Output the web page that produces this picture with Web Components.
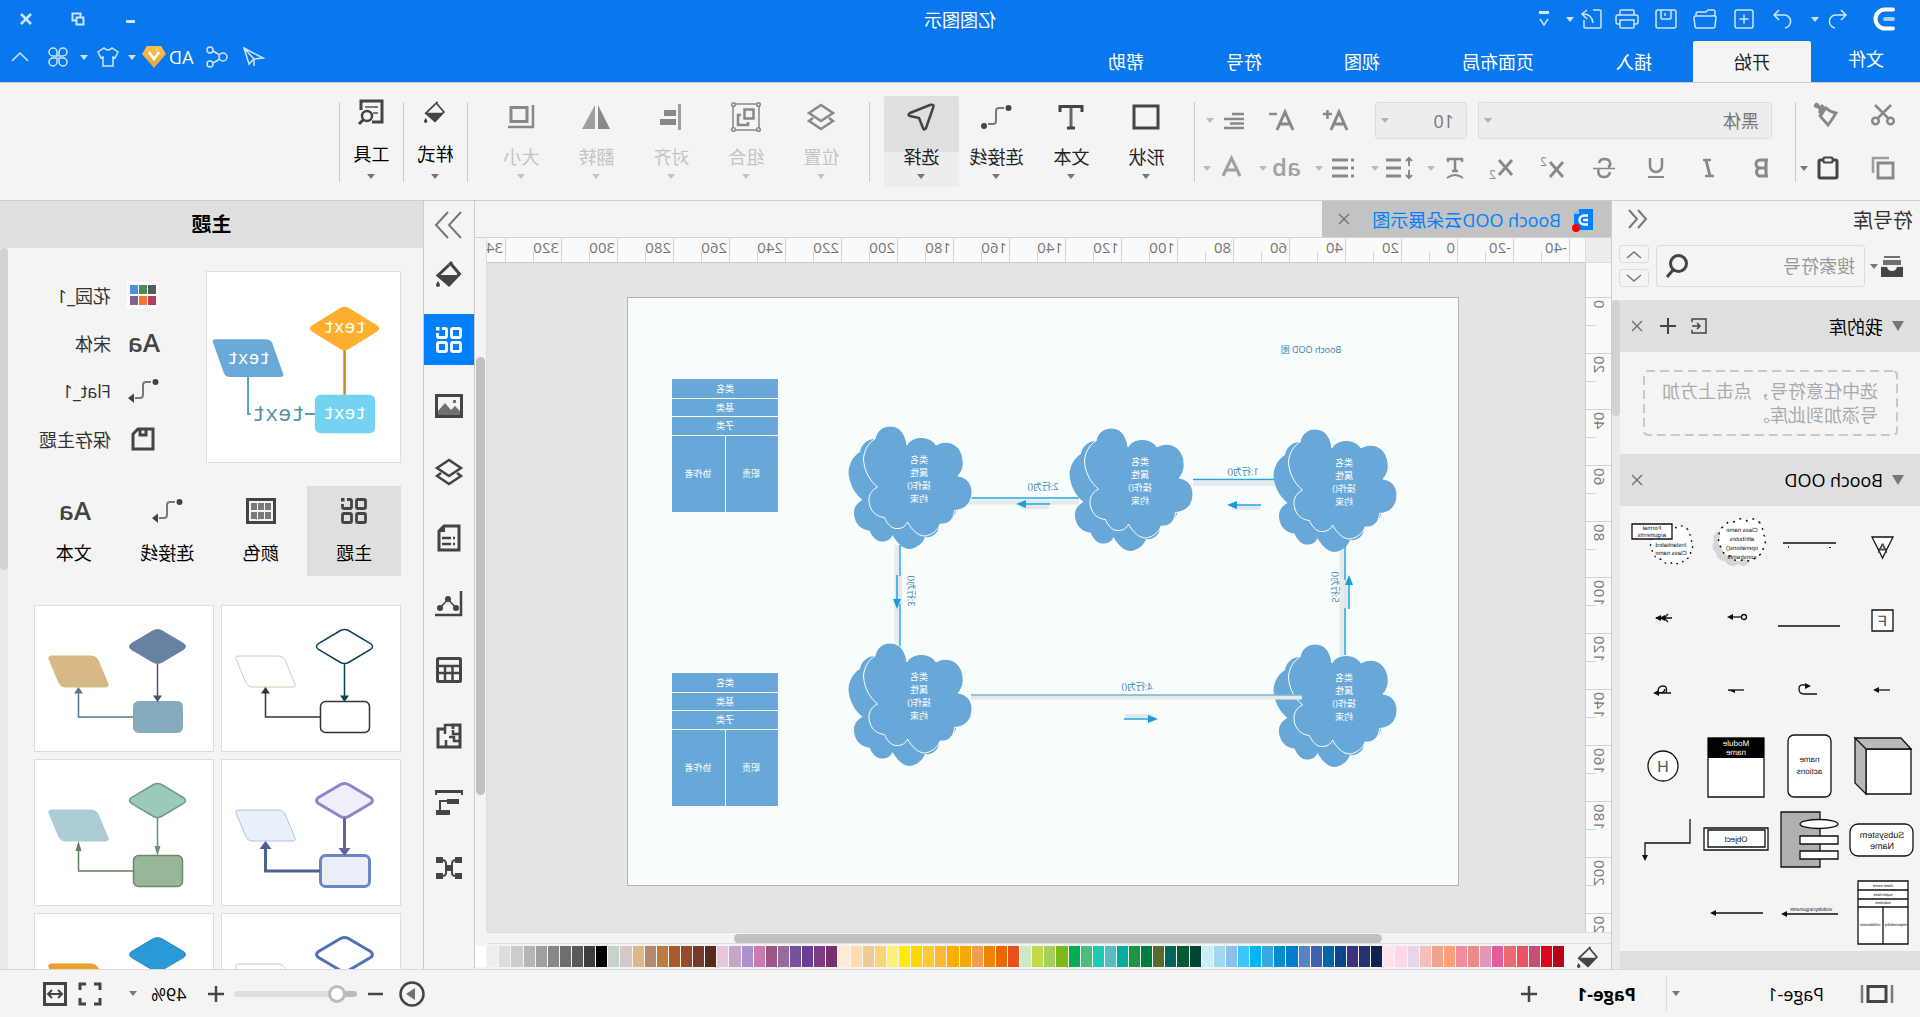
<!DOCTYPE html>
<html lang="zh-CN">
<head>
<meta charset="utf-8">
<title>亿图图示</title>
<style>
html,body{margin:0;height:100%;background:#f4f4f4;overflow:hidden}
body{font-family:"Open Sans","Noto Sans CJK SC",sans-serif;font-size:18px;color:#222}
ed-app{height:100vh;transform:scaleX(-1)}
</style>
</head>
<body>
<ed-app></ed-app>
<script>
const BASE = `
*{box-sizing:border-box}
:host{display:block}
button,select,input{font:inherit;color:inherit;background:none;border:0;margin:0;padding:0}
button{display:flex;align-items:center;justify-content:center}
a{color:inherit;text-decoration:none}
[hidden]{display:none}`;

function define(name, css, html) {
  customElements.define(name, class extends HTMLElement {
    connectedCallback() {
      if (this.shadowRoot) return;
      this.attachShadow({ mode: 'open' }).innerHTML =
        `<style>${BASE}${css}</style>` + (typeof html === 'function' ? html(this) : html);
    }
  });
}

/* name: [width, height, drawing] */
const S = 'stroke="none" fill="currentColor"';
const bucket = (w, h) => [w, h, `<g transform="scale(${w / 26})"><path d="M11 3 2.500 13 13 24 24 14.500 13 4"/><path ${S} d="M3 14h21L13 25z"/><path d="M13 4 10 1"/><path ${S} d="M24 20c1.500 2.500 2 3 2 4a2 2 0 0 1-4 0c0-1 .5-1.500 2-4z"/></g>`];
const squares = `<g stroke-width="2.800"><rect x="1.500" y="1.500" width="9" height="9" rx="1.500"/><rect x="1.500" y="15.500" width="9" height="9" rx="1.500"/><rect x="15.500" y="15.500" width="9" height="9" rx="1.500"/><path d="M20 1.500h-3q-1.500 0-1.500 1.500v6q0 1.500 1.500 1.500h6q1.500 0 1.500-1.500V6"/></g><path ${S} d="M22.500 0h3.500v3.500h-3.500z"/>`;
const elbow = `<circle ${S} cx="3.500" cy="4" r="3"/><path opacity=".7" d="M8 4h5q3 0 3 3v10q0 3 3 3h5"/>`;
const ICONS = {
  logo: [22, 24, '<path stroke="#fff" stroke-width="4" stroke-linecap="round" d="M2 2.500h8a9.500 9.500 0 0 1 0 19H2"/><path stroke="#a3cdfa" stroke-width="4" stroke-linecap="round" d="M2 12h8"/>'],
  undo: [20, 20, '<path d="M6 1 1 6l5 5M1 6h9a6.500 6.500 0 0 1 2 13"/>'],
  redo: [20, 20, '<path d="m14 1 5 5-5 5M19 6h-9a6.500 6.500 0 0 0-2 13"/>'],
  add: [20, 20, '<rect x="1" y="1" width="18" height="18" rx="2"/><path d="M10 5.500v9M5.500 10h9"/>'],
  open: [24, 20, '<path d="M2 8V3a2 2 0 0 1 2-2h5l2 2h8a2 2 0 0 1 2 2v2"/><path d="M5 7h16a2 2 0 0 1 2 2l-1 8a2 2 0 0 1-2 2H4a2 2 0 0 1-2-2L1 9"/><path d="M1 9q0-3 4-2"/>'],
  save: [22, 20, '<rect x="1" y="1" width="20" height="18" rx="2"/><path d="M6 1v8q0 1 1 1h8q1 0 1-1V1M12 4v3"/>'],
  print: [24, 20, '<path d="M5 6V2q0-1 1-1h12q1 0 1 1v4M5 15H3a2 2 0 0 1-2-2V8a2 2 0 0 1 2-2h18a2 2 0 0 1 2 2v5a2 2 0 0 1-2 2h-2M5 11h14v7q0 1-1 1H6q-1 0-1-1z"/>'],
  export: [22, 20, '<path d="M10 1H3a1 1 0 0 0-1 1v16a1 1 0 0 0 1 1h15a1 1 0 0 0 1-1v-7M16 1l5 4-5 5M20 5q-9 0-10 9"/>'],
  more: [12, 16, `<path ${S} d="M1 0h10v3H1z"/><path d="m2 8 4 6 4-6"/>`],
  min: [10, 12, `<path ${S} d="M0 7h9v3H0z"/>`],
  restore: [14, 14, '<path stroke-width="2" d="M1.500 5.500h7v7h-7zM4.500 5V1.500h8v7H9"/>'],
  close: [12, 12, '<path stroke-width="2.500" d="m1 1 10 10M11 1 1 11"/>'],
  x: [12, 12, '<path stroke-width="1.500" d="m1 1 10 10M11 1 1 11"/>'],
  send: [22, 22, '<path d="M1 12 20 2l-5 16-5-5zM20 2 10 13v7"/>'],
  share: [22, 22, '<circle cx="5" cy="11" r="4"/><circle cx="18" cy="4" r="3"/><circle cx="18" cy="18" r="3"/><path d="m8 9 7-4M8 13l7 4"/>'],
  gem: [24, 22, '<defs><linearGradient id="g" x2="0" y2="1"><stop stop-color="#ffc250"/><stop offset="1" stop-color="#e6a238"/></linearGradient></defs><path stroke="none" fill="url(#g)" d="M5 0h14l5 8-12 14L0 8z"/><path stroke="#fff" stroke-width="2.500" d="m7 6 5 7 5-7"/>'],
  shirt: [22, 20, '<path d="M7 1q4 4 8 0l6 4-3 6-2-1v9H6v-9l-2 1-3-6z"/>'],
  clover: [20, 20, '<path d="M9 9H5a4 4 0 1 1 4-4zM11 9V5a4 4 0 1 1 4 4zM9 11v4a4 4 0 1 1-4-4zM11 11h4a4 4 0 1 1-4 4z"/>'],
  up: [18, 10, '<path d="m1 9 8-8 8 8"/>'],
  stepUp: [14, 7, '<path stroke-width="1.500" d="m0 7 7-6 7 6"/>'],
  stepDown: [14, 7, '<path stroke-width="1.500" d="m0 0 7 6 7-6"/>'],
  caret: [8, 5, `<path ${S} d="M0 0h8L4 5z"/>`],
  tri: [12, 10, `<path ${S} d="M0 0h12L6 10z"/>`],
  cut: [24, 22, '<g stroke-width="2.500"><circle cx="4.500" cy="17" r="3.300"/><circle cx="19.500" cy="17" r="3.300"/><path d="M20 1 7 14M4 1l13 13"/></g>'],
  copy: [24, 24, '<path stroke-width="2.800" d="M2 7h15v15H2z"/><path stroke-width="2.500" opacity=".8" d="M6 2h16v15"/>'],
  brush: [26, 26, `<path stroke-width="2.800" d="M3 11q6-1 10-5l6 8-8 9q-4-5-8-12z"/><path ${S} d="m13 6 4-4 2 2 2-3q3-1 4 2t-3 3l-2 2 1 2-4 5z"/>`],
  paste: [22, 24, '<rect x="2" y="4" width="18" height="18" rx="1.500" stroke-width="3"/><rect x="6.500" y="1.500" width="9" height="5" rx="1" fill="#f4f4f4"/>'],
  aplus: [28, 24, `<path stroke-width="3" d="m2 21 8-18 8 18M5 15h10"/><path stroke-width="2.500" d="M17 5h9M21.500 1v9"/>`],
  aminus: [28, 24, `<path stroke-width="3" d="m2 21 8-18 8 18M5 15h10"/><path stroke-width="2.500" d="M18 5h8"/>`],
  lines: [22, 18, '<path stroke-width="2.500" d="M1 2h12M1 7h20M1 11.500h14M1 16h20"/>'],
  bold: [20, 24, `<path stroke-width="3" d="M4 4v17M2 4h8a4 4 0 0 1 0 8H4M4 12h7a4.500 4.500 0 0 1 0 8H2"/>`],
  italic: [20, 24, `<path stroke-width="2.500" d="M7 4h8M4 20h9"/><path stroke-width="3" d="M12 4 8 20"/>`],
  under: [20, 24, `<path stroke-width="2.500" d="M4 2v8a6 6 0 0 0 12 0V2"/><path d="M2 21h16"/>`],
  strike: [22, 24, `<path stroke-width="2.500" d="M16 7q-1-4-5.500-4T5 6.500 7 11M5 16q1 5 6 5t5.500-4-1-4"/><path stroke-width="1.500" d="M0 12.500h22"/>`],
  sup: [26, 24, `<path stroke-width="2.800" d="m2 6 13 15M15 6 2 21"/><text x="18" y="10" style="font-size:12px;font-weight:400">2</text>`],
  sub: [26, 24, `<path stroke-width="2.800" d="m2 4 13 15M15 4 2 19"/><text x="18" y="23" style="font-size:12px;font-weight:400">2</text>`],
  tarc: [18, 24, `<path stroke-width="2.500" d="M2 6V3h14v3M9 3v12M6 15h6"/><path d="M1 22q8-6 16 0"/>`],
  spacing: [28, 22, `<path d="M4 1v8M4 13v8M1 4l3-3 3 3M1 18l3 3 3-3"/><path stroke-width="2.800" d="M12 3h15M12 11h15M12 19h15"/>`],
  list: [22, 20, `<path stroke-width="2.800" d="M0 2h3M6 2h16M0 10h3M6 10h16M0 18h3M6 18h16"/>`],
  ab: [28, 24, `<text x="0" y="20">ab</text>`],
  acol: [20, 24, `<path stroke-width="3" d="m1 20 8.500-18L18 20M4 14h11"/>`],
  rect: [28, 26, '<path stroke-width="3" d="M2 2h24v22H2z"/>'],
  text: [26, 26, '<path stroke-width="3" d="M2 8V2.500h22V8M9 24h8"/><path stroke-width="3" opacity=".8" d="M13 3v20"/>'],
  conn: [32, 26, elbow + `<circle ${S} cx="28" cy="22" r="3"/>`],
  conna: [32, 26, elbow + `<path ${S} d="M25 15.500V25l6-5z"/>`],
  arrow: [28, 28, '<path stroke-width="2.500" stroke-linejoin="round" d="M2 5Q0 1 5 2l20 8q3 2 0 3l-9 2-4 10q-1 3-3 0z"/>'],
  layers: [28, 28, '<path stroke-width="2.500" d="M14 2 26 10 14 18 2 10z"/><path stroke-width="2.500" d="m6 15-4 3 12 8 12-8-4-3"/>'],
  group: [30, 30, '<g stroke-width="1.500"><path d="M2 2h26v26H2z"/><g fill="#f4f4f4"><circle cx="2.500" cy="2.500" r="1.800"/><circle cx="27.500" cy="2.500" r="1.800"/><circle cx="2.500" cy="27.500" r="1.800"/><circle cx="27.500" cy="27.500" r="1.800"/></g></g><path stroke-width="2.500" d="M7.500 7.500h9v9h-9zM13 20v3h10V13h-3"/>'],
  align: [24, 28, `<path ${S} opacity=".8" d="M2 1h3v26H2z"/><path ${S} d="M7 7h12v6H7zM7 16h16v6H7z"/>`],
  flip: [28, 26, `<path ${S} d="M12 1v24H0z"/><path ${S} opacity=".8" d="M15 1v24h13z"/>`],
  size: [28, 26, '<path stroke-width="3" d="M8 3.500h16v14H8z"/><path stroke-width="2.500" d="M2 1v22h25"/>'],
  bucket: bucket(26, 26),
  bucketS: bucket(22, 22),
  tools: [26, 26, '<path stroke-width="3" d="M12 23H2V2h21v9"/><path opacity=".7" d="M6 8h13M6 14h5"/><circle cx="17" cy="17" r="5" stroke-width="2.500"/><path stroke-width="3" d="m21 21 4 4"/>'],
  collapse: [20, 20, '<path d="m9 1-8 9 8 9M18 1l-8 9 8 9"/>'],
  expand: [28, 28, '<path d="m2 1 12 13L2 27M15 1l12 13-12 13"/>'],
  library: [22, 24, `<path ${S} opacity=".75" d="M3 2h16v2H3zM2 6h18v5H2z"/><path ${S} d="M0 13h6q1 4 5 4t5-4h6v10H0z"/>`],
  search: [24, 24, '<circle cx="10.500" cy="9.500" r="8" stroke-width="3"/><path stroke-width="3" d="m16 16 6 7"/>'],
  import: [16, 16, '<path stroke-width="1.500" d="M15 4V1H1v14h14v-3M15 8H7M10 5 7 8l3 3"/>'],
  plus: [16, 16, '<path d="M8 0v16M0 8h16"/>'],
  minus: [16, 16, '<path stroke-width="2.500" d="M0 8h15"/>'],
  plusB: [16, 16, '<path stroke-width="2.500" d="M8 0v16M0 8h16"/>'],
  theme: [26, 26, squares],
  image: [28, 24, `<rect x="1.500" y="1.500" width="25" height="21" stroke-width="3"/><path ${S} opacity=".75" d="M3 21v-4l5-5 4 4 6-7 7 8v4zM7 6h3v3H7z"/>`],
  doc: [24, 28, `<path stroke-width="3" d="M2 2h15l5 5v19H2z"/><path ${S} d="M16 1v7h6z"/><path stroke-width="2.500" d="M6 14h2M10 14h9M6 20h2M10 20h9"/>`],
  chart: [28, 26, `<path stroke-width="2.500" d="M2 0v24h26"/><g ${S}><circle cx="7" cy="17" r="3"/><circle cx="15" cy="8" r="3"/><circle cx="23" cy="17" r="3"/></g><path stroke-width="1.500" d="m7 17 8-9 8 9"/>`],
  table: [26, 26, '<rect x="1.500" y="1.500" width="23" height="23" rx="1" stroke-width="3"/><path stroke-width="2.500" d="M2 9h22M2 16h22M9.500 9v15M17 9v15"/>'],
  plan: [26, 26, '<path stroke-width="3" d="M9 6V2H2v22h22V6h-7"/><path stroke-width="2.500" d="M9 2h8v9M2 11h7V7M2 18h6v-4h5M16 24v-7"/>'],
  org: [28, 26, `<path ${S} d="M0 1h28v5h-2V4H2v2H0zM4 10h12v5H4zM13 21h14v5H13z"/><path d="M16 12h7v9"/>`],
  mind: [28, 26, `<path ${S} d="M1 2h7v6H1zM20 2h7v6h-7zM1 18h7v6H1zM20 18h7v6h-7zM10 10h8v6h-8z"/><path d="M7 5q4 0 4 4v9q0 3-4 3M21 5q-4 0-4 4v9q0 3 4 3"/>`],
  font: [34, 24, `<text x="0" y="21" style="font-size:26px">Aa</text>`],
  disk: [24, 24, '<path stroke-width="3" d="M2 2h15l5 5v15H2zM9 3v5h6V3"/>'],
  palette: [30, 26, '<rect x="1.500" y="1.500" width="27" height="23" stroke-width="3"/><g fill="currentColor" stroke="none" opacity=".7"><path d="M5 5h6v7H5zM12 5h6v7h-6zM19 5h6v7h-6zM5 14h6v7H5zM12 14h6v7h-6zM19 14h6v7h-6z"/></g>'],
  pal6: [32, 26, '<rect width="32" height="26" fill="#fff" stroke="none"/><g stroke="none"><path fill="#545b5e" d="M3 3h8v9H3z"/><path fill="#4f8a5b" d="M12 3h8v9h-8z"/><path fill="#4a90e2" d="M21 3h8v9h-8z"/><path fill="#b73c63" d="M3 14h8v9H3z"/><path fill="#f4772c" d="M12 14h8v9h-8z"/><path fill="#7f6190" d="M21 14h8v9h-8z"/></g>'],
  pages: [34, 18, '<path stroke-width="2.500" opacity=".7" d="M2 0v18M32 0v18"/><path stroke-width="3" d="M8 1.500h18v15H8z"/>'],
  play: [26, 26, `<circle cx="13" cy="13" r="11.500" stroke-width="2.500"/><path ${S} opacity=".75" d="M10 7v12l9-6z"/>`],
  full: [24, 24, '<path stroke-width="3" d="M2 8V2h6M16 2h6v6M22 16v6h-6M8 22H2v-6"/>'],
  fit: [24, 24, '<path stroke-width="3" d="M1.500 1.500h21v21h-21z"/><path d="M6 12h12M9 8l-4 4 4 4M15 8l4 4-4 4"/>']
};
define('ed-icon', `:host{display:inline-flex;flex:none}
svg{display:block;fill:none;stroke:currentColor;stroke-width:var(--sw,2);overflow:visible}
text{fill:currentColor;stroke:none;font-size:24px;font-weight:600;font-family:"Open Sans",sans-serif}`,
  el => { const [w, h, d] = ICONS[el.getAttribute('name')];
    return `<svg width="${w}" height="${h}" viewBox="0 0 ${w} ${h}" aria-hidden="true">${d}</svg>`; });
const ic = (n, c = '') => `<ed-icon name="${n}" class="${c}"></ed-icon>`;

/* ---------- header ---------- */
define('ed-header', `
:host{background:#0978ee;color:#fff;height:82px;--sw:1.5}
.top{display:grid;grid-template-columns:1fr auto 1fr;height:38px;align-items:center}
.quick,.win{display:flex;align-items:center}
.quick{padding-left:25px;color:#cfe4fc}
.quick ed-icon[name=logo]{margin-right:20px}
.quick button{width:39px;height:30px}
.quick .n{width:32px}
.quick .c{width:12px}
.quick .c+.w{margin-left:6px}
.win{justify-content:flex-end}
.win button{width:52px;height:30px;color:#cfe4fc}
.bar{display:flex;height:44px;justify-content:space-between}
nav{display:flex}
nav a{padding:0 41px;line-height:42px;display:block;margin-top:3px}
nav a.file{padding:0 36px;line-height:36px;width:109px}
nav a.on{background:#f4f4f4;color:#222;border-radius:2px 2px 0 0}
.tools{display:flex;align-items:center;height:38px;padding-right:2px;color:#cfe4fc}
.tools button{height:30px;width:36px}
.tools .c{width:12px}
.tools .w{width:40px}
.tools .ad{width:auto;color:#fff;gap:3px;padding:0 4px 0 6px}`,
`<div class="top"><div class="quick">${ic('logo')}
<button class="n" aria-label="撤销">${ic('undo')}</button><button class="c" aria-label="撤销列表">${ic('caret')}</button>
<button class="w" aria-label="重做">${ic('redo')}</button><button aria-label="新建">${ic('add')}</button><button aria-label="打开">${ic('open')}</button><button aria-label="保存">${ic('save')}</button><button aria-label="打印">${ic('print')}</button><button class="n" aria-label="导出">${ic('export')}</button><button class="c" aria-label="导出列表">${ic('caret')}</button><button aria-label="自定义">${ic('more')}</button></div>
<span>亿图图示</span>
<div class="win"><button aria-label="最小化">${ic('min')}</button><button aria-label="还原">${ic('restore')}</button><button aria-label="关闭">${ic('close')}</button></div></div>
<div class="bar"><nav><a class="file" href="#">文件</a><a class="on" href="#">开始</a><a href="#">插入</a><a href="#">页面布局</a><a href="#">视图</a><a href="#">符号</a><a href="#">帮助</a></nav>
<div class="tools"><button aria-label="发送">${ic('send')}</button><button aria-label="分享">${ic('share')}</button><button class="ad">AD${ic('gem')}</button><button class="c" aria-label="账户">${ic('caret')}</button><button aria-label="皮肤">${ic('shirt')}</button><button class="c" aria-label="皮肤列表">${ic('caret')}</button><button class="w" aria-label="应用">${ic('clover')}</button><button aria-label="收起">${ic('up')}</button></div></div>`);

/* ---------- ribbon ---------- */
define('tool-button', `:host{width:75px;flex:none}
button{width:100%;height:91px;flex-direction:column;justify-content:flex-start;color:#444;border-radius:2px}
.i{height:42px;display:flex;align-items:center}
span{line-height:24px;margin:7px 0 5px;color:#222;white-space:nowrap}
.c{color:#777}
:host([disabled]) button{color:#888}
:host([disabled]) span,:host([disabled]) .c{color:#c4c4c4}
:host([on]) button{background:linear-gradient(#dfdfdf 56px,#ededed 56px)}
:host([small]){width:63px}
:host([small]) .i{height:32px}
:host([small]) span{margin:14px 0 8px;color:#000}`,
  el => `<button><div class="i">${ic(el.getAttribute('icon'))}</div><span><slot></slot></span>${ic('caret', 'c')}</button>`);

define('ed-ribbon', `
:host{height:119px;border-top:1px solid #ccc;border-bottom:1px solid #ccc;background:#f4f4f4;display:flex;align-items:flex-start;padding-top:19px;color:#888}
.sep{width:1px;height:80px;background:#ccc;flex:none}
.clip{display:grid;grid-template-columns:60px 54px;row-gap:27px;padding:0 3px 0 7px;height:80px;grid-auto-rows:26px;align-items:center}
.clip button{height:26px}
.clip .p{color:#444;gap:9px;padding-left:14px;justify-content:flex-start}
.clip .p ed-icon+ed-icon{color:#777}
.font{display:flex;flex-direction:column;gap:16px;width:600px}
.row{display:flex;align-items:center;height:37px}
.row+.row{height:26px;padding-left:9px}
.combo{display:flex;align-items:center;border:1px solid #ddd;border-radius:3px;background:#ededed;height:37px;color:#777}
.combo select{appearance:none;width:100%;height:100%;padding:0 12px;outline:0}
.combo ed-icon{margin-right:5px;margin-left:-13px;color:#b0b0b0}
.a{width:294px;margin:0 11px 0 23px}.b{width:92px;margin-right:13px}
.f{width:52px;height:26px}.g{width:54px;height:26px}
.s{width:56px;height:26px;justify-content:flex-start}
.s ed-icon:first-child{width:40px;justify-content:center}
.s .c{color:#bbb}.l{color:#a0a0a0}
.big{display:flex;margin-top:-6px;padding:0 10px}
.big.t{padding:0}`,
`<div class="clip"><button aria-label="剪切">${ic('cut')}</button><button aria-label="格式刷">${ic('brush')}</button><button aria-label="复制">${ic('copy')}</button><button class="p" aria-label="粘贴">${ic('paste')}${ic('caret')}</button></div>
<div class="sep"></div>
<div class="font"><div class="row">
<label class="combo a"><select aria-label="字体"><option>黑体</option></select>${ic('caret')}</label>
<label class="combo b"><select aria-label="字号"><option>10</option></select>${ic('caret')}</label>
<button class="g" aria-label="增大字号">${ic('aplus')}</button><button class="g" aria-label="减小字号">${ic('aminus')}</button><button class="s" aria-label="对齐方式">${ic('lines')}${ic('caret', 'c')}</button></div>
<div class="row"><button class="f" aria-label="加粗">${ic('bold')}</button><button class="f" aria-label="斜体">${ic('italic')}</button><button class="f" aria-label="下划线">${ic('under')}</button><button class="f" aria-label="删除线">${ic('strike')}</button><button class="f" aria-label="上标">${ic('sup')}</button><button class="f" aria-label="下标">${ic('sub')}</button>
${[['tarc', '弯曲'], ['spacing', '行距'], ['list', '项目符号'], ['ab', '高亮'], ['acol', '字体颜色']].map(([n, t], i) => `<button class="s ${i > 2 ? 'l' : ''}" aria-label="${t}">${ic(n)}${ic('caret', 'c')}</button>`).join('')}</div></div>
<div class="sep"></div>
<div class="big"><tool-button icon="rect">形状</tool-button><tool-button icon="text">文本</tool-button><tool-button icon="conn">连接线</tool-button><tool-button icon="arrow" on>选择</tool-button></div>
<div class="sep" style="margin-left:4px"></div>
<div class="big"><tool-button disabled icon="layers">位置</tool-button><tool-button disabled icon="group">组合</tool-button><tool-button disabled icon="align">对齐</tool-button><tool-button disabled icon="flip">翻转</tool-button><tool-button disabled icon="size">大小</tool-button></div>
<div class="sep" style="margin-left:6px"></div>
<div class="big t"><tool-button small icon="bucketS">样式</tool-button></div><div class="sep"></div>
<div class="big t"><tool-button small icon="tools">工具</tool-button></div><div class="sep"></div>`);

/* ---------- symbol library ---------- */
const K = 'stroke="#111" stroke-width="1.300"';
const T = (x, y, s, t, f = '#111') => `<text x="${x}" y="${y}" font-size="${s}" fill="${f}">${t}</text>`;
const dotCloud = 'M18 14q6-7 13-2 6-5 13 1 6-2 9 4 8 3 5 11 4 6-2 11-1 8-9 8-5 8-13 3-8 5-12-3-8-1-7-9-5-7 0-13 0-7 3-11z';
const head = (x, y, r = 1) => `<path fill="#111" d="M${x} ${y}l${-6 * r}-3v6z"/>`;
const SYMBOLS = [
  `<path ${K} fill="#fff" d="M25 26h21L35.500 47z"/><path ${K} d="M31 38.500h9M35.500 33l-4 8M35.500 33l4 8"/>${T(35.500, 42, 14, 'A', '#555')}`,
  `<path ${K} d="M9 32h53"/><path fill="#333" d="M14 36h2v1h-2zM56 35h1v2h-1z"/>`,
  `<g transform="translate(-6 -2)"><path fill="#d6d6d6" transform="translate(6 5)" d="${dotCloud}"/><path fill="#fff" stroke="#111" stroke-width="1.500" stroke-dasharray="2 5" d="${dotCloud}"/></g>${T(30, 21, 6, 'Class name')}${T(30, 30, 6, 'attributes')}${T(30, 39, 6, 'operations()')}${T(30, 48, 6, 'constraints')}`,
  `<g transform="translate(-5 6) scale(.9)"><path fill="#fff" stroke="#111" stroke-width="1.500" stroke-dasharray="2 5" d="${dotCloud}"/></g><path ${K} fill="#fff" d="M27 13h40v15H27z"/>${T(47, 19, 6, 'Formal')}${T(47, 26, 6, 'arguments')}${T(28, 36, 6, 'Instantiated')}${T(28, 44, 6, 'Class name')}`,
  `<path ${K} fill="#fff" d="M25 26h21v21H25z"/>${T(35.500, 42, 15, 'F', '#444')}`,
  `<path ${K} d="M5 42h62"/>`,
  `<circle ${K} cx="28" cy="33" r="2.500"/><path ${K} d="M30 33h12"/>${head(45, 33)}`,
  `<path ${K} d="M27 34h16M31 30l4 4-4 4"/>${head(44, 34)}${head(40, 34)}`,
  `<path ${K} d="M28 33h14"/>${head(45, 33)}`,
  `<path ${K} d="M28 37h13q5 0 5-5t-5-4h-3"/><path fill="#111" d="m34 29 6-3v6z"/>`,
  `<path ${K} d="M28 33h16"/><path fill="#111" d="m44 33-7 3v-3z"/>`,
  `<path ${K} d="M28 36h16M33 36q-2-7 3-7t5 6q-6 2-7-3"/>${head(46, 36)}`,
  `<path ${K} fill="#fff" d="M7 19h45v45H7z"/><path ${K} fill="#b9b9b9" d="M7 19 17 8h46L52 19zM52 19 63 8v45L52 64z"/>`,
  `<rect ${K} stroke="#555" fill="#fff" x="14" y="5" width="43" height="62" rx="6"/>${T(35.500, 32, 8, 'name')}${T(35.500, 44, 8, 'actions')}`,
  `<path ${K} fill="#fff" d="M8 8h56v59H8z"/><path fill="#000" d="M8 8h56v20H8z"/>${T(36, 16, 8, 'Module', '#fff')}${T(36, 25, 8, 'name', '#fff')}`,
  `<circle ${K} stroke="#555" fill="#fff" cx="36" cy="36" r="15"/>${T(36, 42, 16, 'H', '#555')}`,
  `<rect ${K} stroke="#555" fill="#fff" x="5" y="21" width="63" height="32" rx="8"/>${T(36, 35, 9, 'Subsystem')}${T(36, 46, 9, 'Name')}`,
  `<path ${K} fill="#b0b0b0" d="M25 9h39v55H25z"/><g ${K} fill="#fff"><ellipse cx="26" cy="21" rx="19" ry="4.500"/><path d="M7 33h38v8H7zM7 48h38v8H7z"/></g>`,
  `<path ${K} fill="#fff" d="M4 25h64v22H4z"/><path ${K} d="M7 27h57v17H7z"/>${T(36, 39, 8, 'Object')}`,
  `<path ${K} d="M9 16v24h45v14"/><path fill="#111" d="m54 58-3-6h6z"/>`,
  `<path ${K} fill="#fff" d="M10 5h50v63H10zM10 14h50M10 23h50M10 31h50M35 31v37"/>${T(35, 11, 4, 'class name')}${T(35, 20, 4, 'superclass')}${T(35, 28, 4, 'subclass')}${T(22, 50, 4, 'responsibility')}${T(48, 50, 4, 'collaborator')}`,
  `<path ${K} d="M7 38h54"/>${head(64, 38)}${T(34, 35, 5, 'visibility/arguments')}`,
  `<path ${K} d="M9 37h50"/>${head(62, 37)}`
];
define('symbol-cell', `svg{display:block;fill:none}text{text-anchor:middle;font-family:"Liberation Sans",sans-serif;text-rendering:geometricPrecision}`,
  el => `<svg width="73" height="73" viewBox="0 0 73 73">${SYMBOLS[el.getAttribute('index')]}</svg>`);
define('lib-section', `
header{display:flex;align-items:center;height:52px;background:#dfdfdf;padding:0 5px 0 16px;gap:9px;color:#000}
.t{flex:1}ed-icon{color:#777}
button{width:24px;height:24px}button ed-icon{color:#444}
.acts{display:flex;gap:7px}button:last-child ed-icon{color:#777}`,
  el => `<header>${ic('tri')}<span class="t">${el.getAttribute('label')}</span><div class="acts">${el.hasAttribute('editable') ? `<button aria-label="导入">${ic('import')}</button><button aria-label="添加">${ic('plus')}</button>` : ''}<button aria-label="关闭">${ic('x')}</button></div></header><slot></slot>`);
define('ed-library', `
:host{width:309px;border-right:1px solid #ccc;display:flex;flex-direction:column;flex:none}
.h{display:flex;justify-content:space-between;align-items:center;height:36px;padding:0 15px 0 7px;font-size:20px;color:#333}
.h button{color:#777}
.find{display:flex;align-items:center;margin:8px 7px 13px 17px;gap:3px;height:42px;color:#444}
.find>ed-icon+ed-icon{color:#777}
.find label{display:flex;align-items:center;border:1px solid #ddd;border-radius:3px;height:42px;width:209px;margin:0 4px 0 2px;padding-right:8px}
input{flex:1;min-width:0;padding-left:9px;outline:0}
input::placeholder{color:#999;opacity:1}
.ud{display:flex;flex-direction:column;gap:6px}
.ud button{width:30px;height:18px;border:1px solid #ddd;border-radius:3px;color:#777}
.body{display:flex;flex:1;min-height:0}
.main{flex:1;overflow:hidden}
.bar{width:8px;background:#eaeaea;flex:none}
.bar i{display:block;height:116px;background:#d2d2d2;border-radius:4px}
.hint{margin:18px 23px 18px 22px;height:66px;position:relative;padding:9px 18px 0 20px;line-height:24px;color:#aaa}
.hint svg{position:absolute;inset:0;width:100%;height:100%;overflow:visible}
.grid{display:grid;grid-template-columns:repeat(4,73px);padding:5px 0 2px 2px}
.end{height:30px;background:#dfdfdf}`,
`<div class="h"><span>符号库</span><button aria-label="折叠">${ic('collapse')}</button></div>
<div class="find">${ic('library')}${ic('caret')}<label><input type="text" placeholder="搜索符号" aria-label="搜索符号">${ic('search')}</label><div class="ud"><button aria-label="上一个">${ic('stepUp')}</button><button aria-label="下一个">${ic('stepDown')}</button></div></div>
<div class="body"><div class="main">
<lib-section label="我的库" editable><div class="hint"><svg><rect x="1" y="1" width="253" height="64" rx="4" fill="none" stroke="#c8c8c8" stroke-width="2" stroke-dasharray="9 5"/></svg>选中任意符号，点击上方加号添加到此库。</div></lib-section>
<lib-section label="Booch OOD"><div class="grid">${SYMBOLS.map((_, i) => `<symbol-cell index="${i}"></symbol-cell>`).join('')}</div></lib-section>
<div class="end"></div></div><div class="bar"><i></i></div></div>`);

/* ---------- drawing ---------- */
const CLOUD = 'M65 19C67 5 74 0 82 0C90 0 96 6 97 13C104 17 108 25 108.500 33C108 45 102 55 94.500 61C104 66 104 74 102 80C100 87 94 91 87.500 91.500C85 98 80 102.500 76 102.500C70 103 66 100 64.500 96C60 104 54 110 47 110C40 109 34 104 32 98C24 99 18 94 17.500 84.500C7 84 0 77 0 66C0 57 6 51 14 50C8 44 8 36 10 29C14 17 26 13 36 19C42 9 60 9 65 19Z';
const cloud = (x, y) => `<g transform="translate(${x} ${y})"><path fill="#68a8d8" transform="translate(15 13)" d="${CLOUD}"/><path fill="#68a8d8" stroke="#fff" d="${CLOUD}"/>${['类名', '属性', '操作()', '约束'].map((t, i) => `<text x="53" y="${37 + i * 13}" fill="#fff">${t}</text>`).join('')}</g>`;
const card = y => `<g transform="translate(1142 ${y})"><path fill="#68a8d8" stroke="#fff" d="M-.5-.5h107v134H-.5zM0 19.500h106M0 37.500h106M0 56.500h106M52.500 56v77"/><g fill="#fff"><text x="53" y="13">类名</text><text x="53" y="32">基类</text><text x="53" y="50">子类</text><text x="27" y="98">职责</text><text x="80" y="98">协作者</text></g></g>`;
const wire = (d, dx, dy, c = '#22a7e0', w = 1.5) => `<path d="${d}" transform="translate(${dx} ${dy})" stroke="#e6eaeb" stroke-width="5"/><path d="${d}" stroke="${c}" stroke-width="${w}"/>`;
const mark = (x, y, a) => `<g transform="translate(${x} ${y}) rotate(${a})"><path stroke="#e3e7e8" stroke-width="4" d="M-16 3h28"/><path stroke="#1ba6e0" stroke-width="1.500" d="M-17 0h27"/><path fill="#1b9ddb" d="M17 0 7-4v8z"/></g>`;
const lab = (x, y, t, a = 0) => `<text transform="translate(${x} ${y}) rotate(${a})" fill="#3581ad">${t}</text>`;
define('ood-diagram', `:host{width:832px;height:589px;border:1px solid #b0b3b3;background:#f7fcfd;position:absolute;left:126px;top:34px}
svg{display:block;fill:none;width:100%;height:100%}text{text-anchor:middle;font-size:9px;font-family:"Open Sans","Noto Sans CJK SC",sans-serif}`,
`<svg viewBox="462 298 830 587">
${wire('M640 479.500h87', 0, 4)}${wire('M841 498h112', 0, 4)}${wire('M1020 545v102', 3, 0, '#5bbdea', 2)}${wire('M575 545v112', 3, 0)}
${cloud(523, 429)}${cloud(727, 428)}${cloud(948, 426)}${cloud(948, 643)}${cloud(523, 644)}
${wire('M618 695h331', 0, 2, '#3f9bc6', 1)}
${card(379)}${card(673)}
${mark(676, 505, 0)}${mark(887, 504, 0)}${mark(1023, 592, 90)}${mark(779, 719, 180)}${mark(571, 592, -90)}
${lab(609, 353, 'Booch OOD 图')}${lab(677, 475, '1:行为()')}${lab(877, 490, '2:行为()')}${lab(1012, 591, '3:行为()', -90)}${lab(783, 690, '4:行为()')}${lab(588, 587, '5:行为()', -90)}
</svg>`);

const seq = (a, n) => Array.from({ length: n }, (_, i) => a + 20 * i);
const PALETTE = 'b30515 d9071c c44f77 eb5360 eb6b71 e75a9c e197b8 ee8b86 f08d9c ff9f7a efa58c f7bfb9 ead4ea ffd5e8 ffe2ea 10214f 243370 3e3180 0a468e 0068a5 3e62af 5783c4 007fcf 008ccf 38a8e0 00b5f5 39c6f9 8cc0ec a0d8f0 cdecf6 034432 055a30 00655e 576c2b 007d43 1e9641 00ae9c 55bdc3 1ccbb1 4cbb7c 00ae52 7db917 a5d060 c2d947 cfe8c9 e7501d ec6601 f18501 f29b53 f3a902 ffae00 fcb739 fbca35 ffd700 ffec00 fff07a fcd475 eccb94 ffdcb0 fdebd2 7a306f 813b85 6a3f96 75529c 9a6a9f 9c5787 cc7bb0 ab92cd c5a6c9 ecc3dc 5c2a1a 743a2d 944d27 a95a2a be7b41 b38a70 dfb887 d2cbc5 c6d3c9 000000 3e3e3e 595959 6e6e6e 888888 9f9f9e b5b6b6 cacdcb dcdddd eeeeee ffffff'.split(' ');
define('ed-canvas', `
:host{flex:1;min-width:0;display:flex;flex-direction:column}
.tabs{height:37px;border-bottom:1px solid #d4d4d4;display:flex}
.tab{display:flex;align-items:center;background:#c3c3c3;color:#0080ff;padding:0 16px 0 18px;gap:13px;width:289px}
.tab svg{flex:none;overflow:visible}.tab span{flex:1;white-space:nowrap}.tab button{color:#777}
.mid{flex:1;min-height:0;display:grid;grid-template:25px 1fr 12px/26px 1fr 12px}
.corner{background:#ededed;border:1px solid #ddd;border-width:0 1px 1px 0}
.hr,.vr{background:#fafafa;display:flex;overflow:hidden;font-size:15px;color:#777;line-height:18px}
.hr{border-bottom:1px solid #ccc;padding-left:15px}
.vr{flex-direction:column;border-right:1px solid #ccc;padding-top:34px}
.hr div{flex:0 0 56px;border-left:1px solid #d4d4d4;padding-left:2px;background:linear-gradient(#d4d4d4,#d4d4d4) 27px 14px/1px 11px no-repeat}
.vr div{flex:0 0 56px;border-top:1px solid #d4d4d4;padding:2px 0 0 2px;background:linear-gradient(#d4d4d4,#d4d4d4) 15px 27px/11px 1px no-repeat}
.vr span{writing-mode:vertical-rl;transform:rotate(180deg);display:block;width:18px}
.stage{background:#e4e4e4;position:relative;overflow:hidden}
.vs{grid-row:1/3;grid-column:3;padding:119px 1px 0;border-left:1px solid #ddd}
.vs i{display:block;height:438px;border-radius:5px;background:#c0c0c0}
.hs{grid-column:1/3;border:1px solid #ddd;border-width:1px 0;padding:1px 0 0 229px}
.hs i{display:block;width:648px;height:9px;border-radius:5px;background:#c0c0c0}
.colors{display:flex;height:25px;align-items:center;color:#444}
.colors>ed-icon{width:47px;padding-left:12px}
.sw{flex:1;display:flex;height:21px;gap:1px}
.sw button{flex:1}`,
`<div class="tabs"><div class="tab"><svg width="19" height="24" viewBox="0 0 19 24"><path fill="#0080ff" d="M0 2h14l5 5v16H0z"/><path fill="#8cc4ff" d="M14 2v5h5z"/><path fill="none" stroke="#fff" stroke-width="2.500" d="M5 8.500h4a4 4 0 0 1 0 9H5M5 13h5"/><circle cx="17" cy="21" r="4" fill="red"/></svg><span>Booch OOD云朵展示图</span><button aria-label="关闭">${ic('x')}</button></div></div>
<div class="mid"><div class="corner"></div><div class="hr">${seq(-40, 20).map(n => `<div>${n}</div>`).join('')}</div>
<div class="vr">${seq(0, 12).map(n => `<div><span>${n}</span></div>`).join('')}</div><div class="stage"><ood-diagram></ood-diagram></div>
<div class="vs"><i></i></div><div class="hs"><i></i></div></div>
<div class="colors">${ic('bucketS')}<div class="sw">${PALETTE.map(c => `<button aria-label="#${c}" style="background:#${c}"></button>`).join('')}</div></div>`);

/* ---------- right side ---------- */
define('ed-dock', `:host{width:52px;border:1px solid #ccc;border-width:0 1px;display:flex;flex-direction:column;color:#444;flex:none}
button{height:51px;width:50px;margin-bottom:15px;--sw:3}
button.x{height:47px;margin-bottom:0;color:#777;--sw:2}
button.on{background:#0080ff;color:#fff}button.thin{--sw:2}`,
`<button class="x" aria-label="展开">${ic('expand')}</button>` + [['bucket', '填充'], ['theme', '主题'], ['image', '图片'], ['layers', '图层'], ['doc', '页面'], ['chart', '图表'], ['table', '表格'], ['plan', '平面图'], ['org', '甘特图'], ['mind', '导图']].map(([n, t], i) => `<button class="${i == 1 ? 'on' : 'chart org mind'.includes(n) ? 'thin' : ''}" aria-label="${t}">${ic(n)}</button>`).join(''));

const dia = (cx, cy, w, h) => `M${cx - 4} ${cy - h + 1}q4-2 8 0L${cx + w - 2} ${cy - 3}q4 3 0 6L${cx + 4} ${cy + h - 1}q-4 2-8 0L${cx - w + 2} ${cy + 3}q-4-3 0-6z`;
const para = (x, y, w, h, s) => `M${x + s + 5} ${y}H${x + w - 3}q4 0 3 3l${-s + 2} ${h - 7}q-2 4-6 4H${x + 3}q-4 0-3-3l${s - 2}-${h - 7}q2-4 7-4z`;
const THEMES = [
  { d: ['#fff', '#0b4159', 1.5], p: ['#fff', '#d5cab8', 1], r: ['#fff', '#333', 1.5], a: '#0b4159', b: '#333', w: 1.5 },
  { d: ['#6781a2', '#6781a2', 1], p: ['#d8b885', '#d8b885', 1], r: ['#85aabc', '#85aabc', 1], a: '#46566f', b: '#5a7789', w: 1.5 },
  { d: ['#f0eef9', '#8f86ca', 3], p: ['#eaf0f9', '#a9c4e2', 1], r: ['#eaeef8', '#6b86c5', 3], a: '#6a629f', b: '#4d628f', w: 3 },
  { d: ['#9ccab9', '#6d9b88', 1.5], p: ['#aaccd5', '#aaccd5', 1], r: ['#98b698', '#6a8a6c', 1.5], a: '#6b8b7d', b: '#5f7f62', w: 1.5, k: 3, n: 10 },
  { d: ['#fff', '#4f72b3', 3], p: ['#fff', '#e3bcc8', 1], r: ['#fff', '#4f72b3', 3], a: '#4f72b3', b: '#4f72b3', w: 3 },
  { d: ['#2a9ad6', '#258bc4', 1], p: ['#eba12b', '#e69a24', 1], r: ['#74b93e', '#74b93e', 1], a: '#258bc4', b: '#258bc4', w: 1.5 }
];
define('theme-card', `:host{width:180px;height:147px}button{width:180px;height:147px;background:#fff;border:1px solid #ddd}svg{display:block;fill:none}`,
  el => { const t = THEMES[el.getAttribute('index')], f = ([a, b, c]) => `fill="${a}" stroke="${b}" stroke-width="${c}"`, k = t.k || 3 + t.w, n = t.n || 5 + t.w;
    return `<button aria-label="主题样式"><svg width="178" height="145" viewBox="1 1 178 145"><path ${f(t.d)} d="${dia(56.5, 41.5, 28, 17)}"/><path ${f(t.p)} d="${para(106, 51, 59, 31, 12)}"/><rect ${f(t.r)} x="31.500" y="96.500" width="49" height="31" rx="5"/>
<path stroke="${t.a}" stroke-width="${t.w}" d="M56.500 59v32"/><path fill="${t.a}" d="M56.500 97l${-k}-${n}h${2 * k}z"/><path stroke="${t.b}" stroke-width="${t.w}" d="M81 112h54.500V88"/><path fill="${t.b}" d="M135.500 82l${-k} ${n}h${2 * k}z"/></svg></button>`; });

define('ed-themes', `
:host{flex:none;width:423px;display:flex;flex-direction:column}
h2{margin:0;background:#dfdfdf;height:47px;line-height:48px;text-align:center;font-size:20px;color:#000}
.body{display:flex;flex:1;min-height:0}
.main{flex:1;overflow:hidden;padding:23px 0 0 22px}
.bar{width:8px;background:#eaeaea}.bar i{display:block;height:322px;background:#d2d2d2;border-radius:4px}
.pre{display:flex;gap:46px}
.pre>svg{background:#fff;border:1px solid #ddd;flex:none}
.pre text{font:18px "Liberation Mono",monospace;text-anchor:middle;fill:#fff}
.opts{display:flex;flex-direction:column}
.opts button{height:48px;justify-content:flex-start;color:#333;white-space:nowrap}
.opts ed-icon{width:34px;margin-right:15px;justify-content:center;color:#444}
.tabs{display:flex;margin-top:23px;width:374px}
.tabs button{flex:1;height:90px;flex-direction:column;color:#444}
.tabs span{color:#000;line-height:24px;margin-top:17px}
.tabs ed-icon{height:26px;align-items:center}
.tabs .on{background:#dfdfdf}
.grid{display:grid;grid-template-columns:180px 180px;gap:7px;margin-top:29px}`,
`<h2>主题</h2><div class="body"><div class="main"><div class="pre">
<svg width="195" height="192" viewBox="0 0 195 192"><path fill="#ffaf30" d="${dia(56, 57, 35, 22)}"/><path stroke="#c08a35" stroke-width="2.500" d="M56 79v45"/><rect x="25" y="124" width="61" height="39" rx="6" fill="#74d3f1"/><path fill="#6aa8d7" d="${para(118, 68, 71, 38, 13)}"/><path fill="none" stroke="#5a9db3" stroke-width="2" d="M86 143.500h10M151 143.500h2.500V106"/><text x="56" y="62">text</text><text x="56" y="149">text</text><text x="153" y="93">text</text><text x="123" y="151" style="fill:#4f93a8;font-size:22px">text</text></svg>
<div class="opts"><button>${ic('pal6')}花园_1</button><button>${ic('font')}宋体</button><button>${ic('conna')}Flat_1</button><button>${ic('disk')}保存主题</button></div></div>
<div class="tabs"><button class="on">${ic('theme')}<span>主题</span></button><button>${ic('palette')}<span>颜色</span></button><button>${ic('conna')}<span>连接线</span></button><button>${ic('font')}<span>文本</span></button></div>
<div class="grid">${THEMES.map((_, i) => `<theme-card index="${i}"></theme-card>`).join('')}</div></div><div class="bar"><i></i></div></div>`);

/* ---------- status ---------- */
define('ed-status', `
:host{height:48px;border-top:1px solid #d8d8d8;display:flex;align-items:center;color:#444;background:#f4f4f4}
.p{color:#000;white-space:nowrap}
.l{display:flex;align-items:center;width:254px;height:35px;padding:0 5px 0 26px;border-right:1px solid #ddd}
.l .p{margin:0 auto 0 36px}.c{color:#777}
b.p{margin:0 40px 0 30px}
.r{margin-left:auto;display:flex;align-items:center;padding-right:43px}
input{appearance:none;width:123px;height:18px;margin:0 10px}
input::-webkit-slider-runnable-track{height:6px;border-radius:3px;background:linear-gradient(90deg,#bbb 20px,#dfdfdf 20px)}
input::-webkit-slider-thumb{appearance:none;width:18px;height:18px;margin-top:-6px;border-radius:50%;background:#fff;border:3px solid #bbb}
.r .p{margin:0 14px 0 22px}.full{margin:0 11px 0 27px}.play{margin-right:16px}`,
`<div class="l">${ic('pages')}<span class="p">Page-1</span>${ic('caret', 'c')}</div><b class="p">Page-1</b><button aria-label="添加页面">${ic('plusB')}</button>
<div class="r"><button class="play" aria-label="播放">${ic('play')}</button><button aria-label="缩小">${ic('minus')}</button><input type="range" aria-label="缩放" min="0" max="100" value="11"><button aria-label="放大">${ic('plusB')}</button><span class="p">49%</span>${ic('caret', 'c')}<button class="full" aria-label="全屏">${ic('full')}</button><button aria-label="适应宽度">${ic('fit')}</button></div>`);

define('ed-app', `:host{display:flex;flex-direction:column;background:#f4f4f4}main{flex:1;min-height:0;display:flex}`,
  `<ed-header></ed-header><ed-ribbon></ed-ribbon><main><ed-library></ed-library><ed-canvas></ed-canvas><ed-dock></ed-dock><ed-themes></ed-themes></main><ed-status></ed-status>`);
</script>
</body>
</html>
